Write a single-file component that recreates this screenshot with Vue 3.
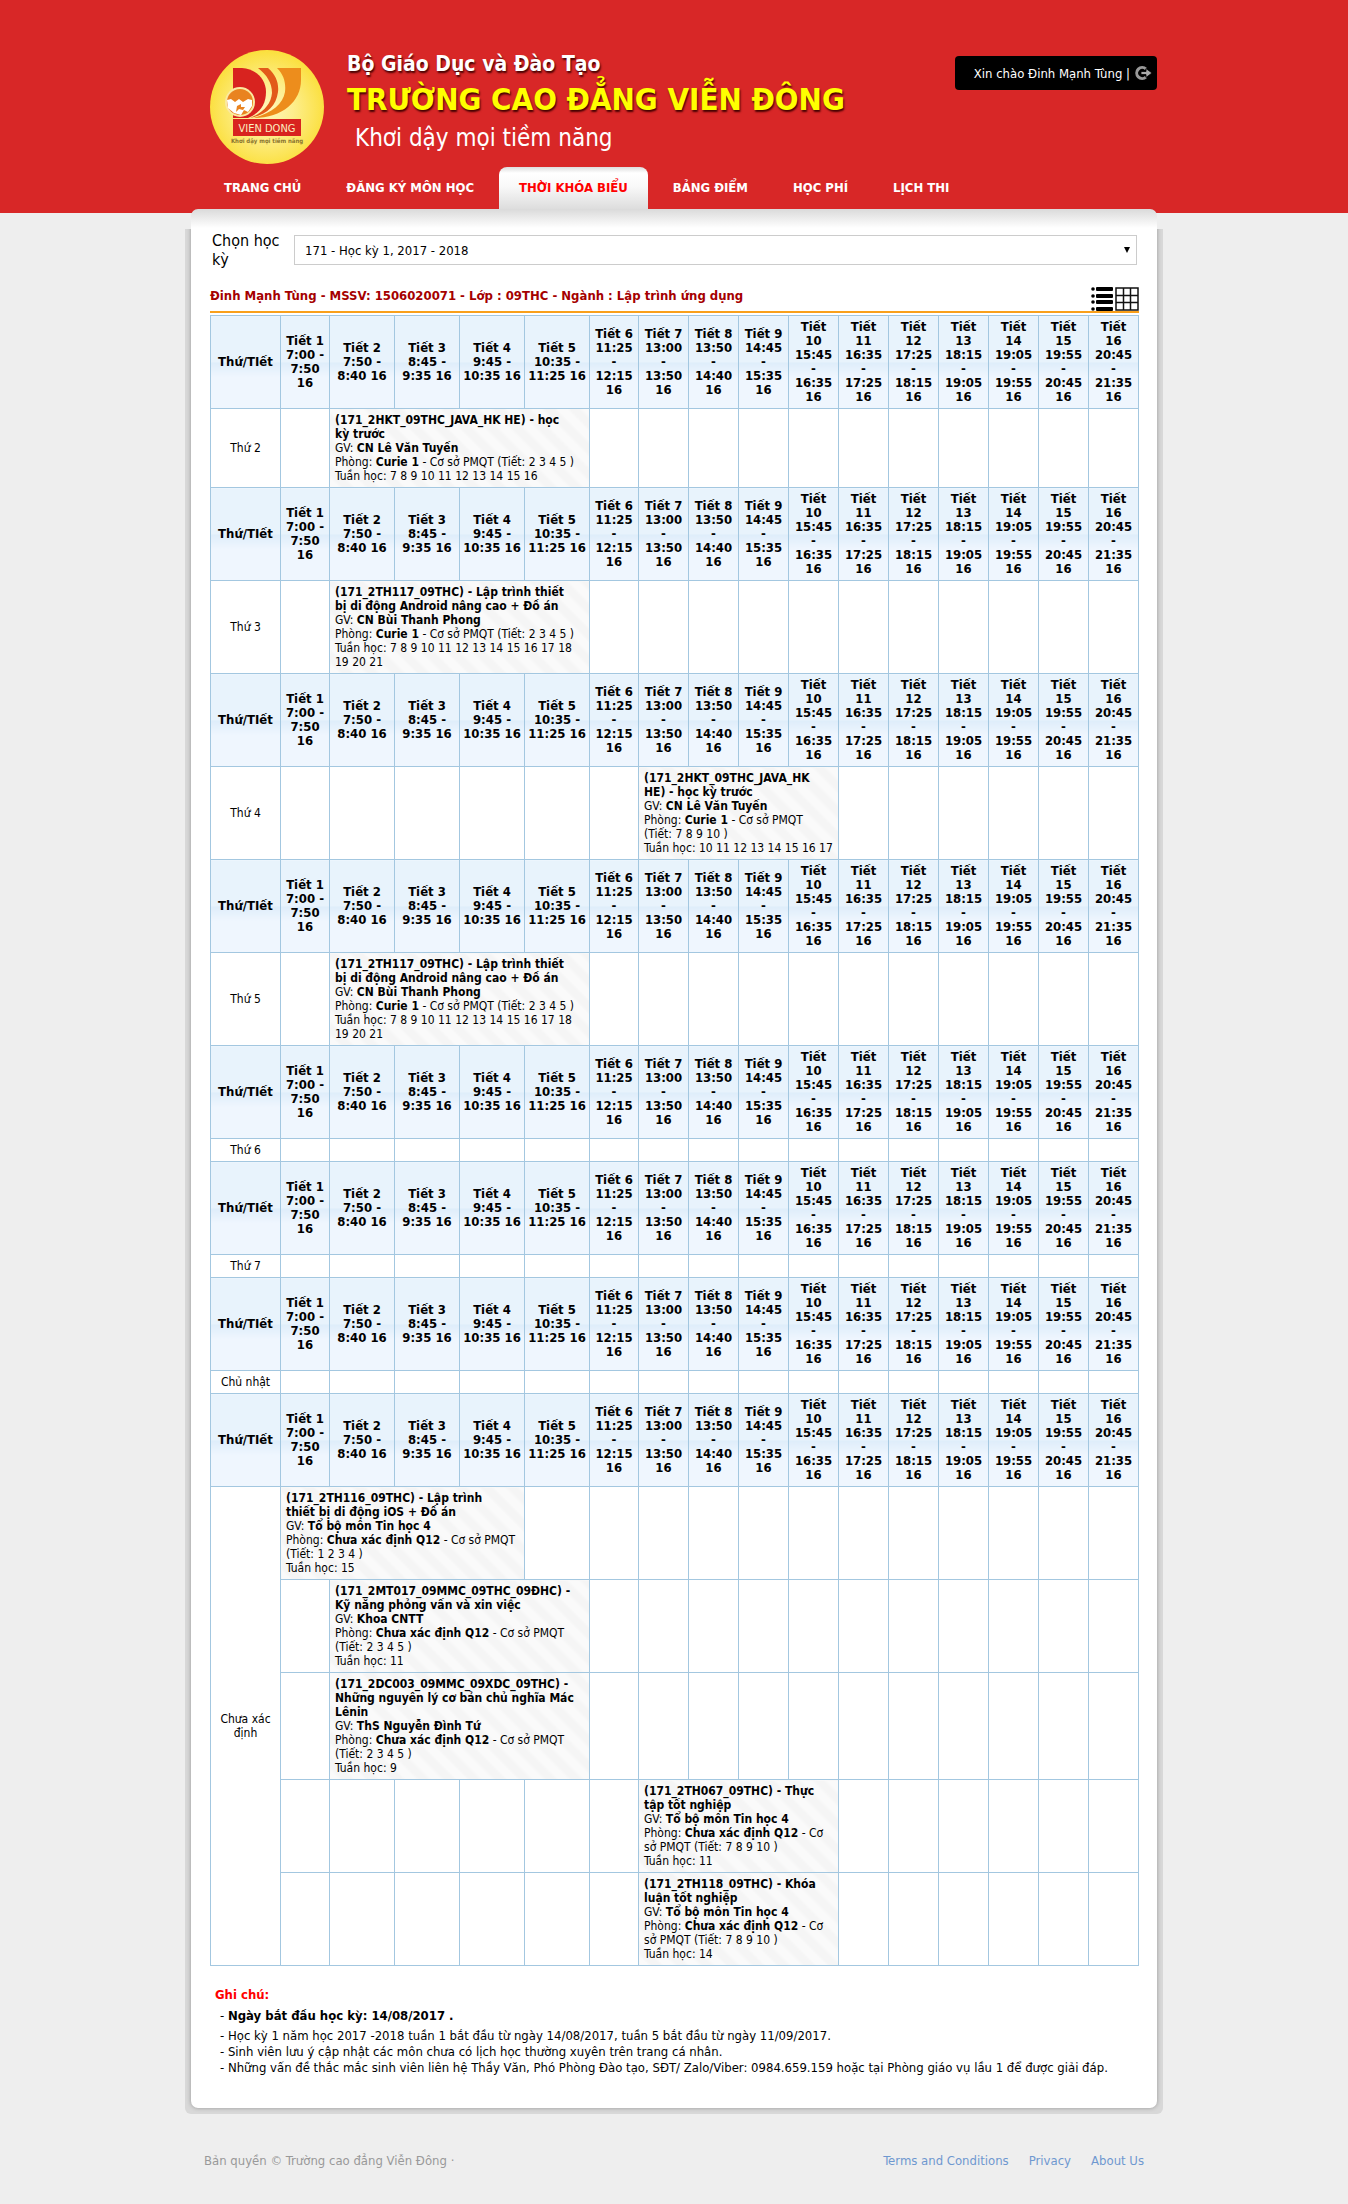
<script setup>
import { ref } from 'vue'

const nav = [
  { text: 'TRANG CHỦ' },
  { text: 'ĐĂNG KÝ MÔN HỌC' },
  { text: 'THỜI KHÓA BIỂU', active: true },
  { text: 'BẢNG ĐIỂM' },
  { text: 'HỌC PHÍ' },
  { text: 'LỊCH THI' },
]

const semester = ref('171')

const columnWidths = [70, 49, 65, 65, 65, 65, 49, 50, 50, 50, 50, 50, 50, 50, 50, 50, 50]

const periods = [
  ['Tiết 1', '7:00 -', '7:50', '16'],
  ['Tiết 2', '7:50 -', '8:40 16'],
  ['Tiết 3', '8:45 -', '9:35 16'],
  ['Tiết 4', '9:45 -', '10:35 16'],
  ['Tiết 5', '10:35 -', '11:25 16'],
  ['Tiết 6', '11:25', '-', '12:15', '16'],
  ['Tiết 7', '13:00', '-', '13:50', '16'],
  ['Tiết 8', '13:50', '-', '14:40', '16'],
  ['Tiết 9', '14:45', '-', '15:35', '16'],
  ['Tiết', '10', '15:45', '-', '16:35', '16'],
  ['Tiết', '11', '16:35', '-', '17:25', '16'],
  ['Tiết', '12', '17:25', '-', '18:15', '16'],
  ['Tiết', '13', '18:15', '-', '19:05', '16'],
  ['Tiết', '14', '19:05', '-', '19:55', '16'],
  ['Tiết', '15', '19:55', '-', '20:45', '16'],
  ['Tiết', '16', '20:45', '-', '21:35', '16'],
]

const android = {
  start: 2,
  title: ['(171_2TH117_09THC) - Lập trình thiết', 'bị di động Android nâng cao + Đồ án'],
  teacher: 'CN Bùi Thanh Phong',
  room: 'Curie 1',
  place: [' - Cơ sở PMQT (Tiết: 2 3 4 5 )'],
  weeks: ['7 8 9 10 11 12 13 14 15 16 17 18', '19 20 21'],
}

const days = [
  {
    name: ['Thứ 2'],
    rows: [{
      start: 2,
      title: ['(171_2HKT_09THC_JAVA_HK HE) - học', 'kỳ trước'],
      teacher: 'CN Lê Văn Tuyến',
      room: 'Curie 1',
      place: [' - Cơ sở PMQT (Tiết: 2 3 4 5 )'],
      weeks: ['7 8 9 10 11 12 13 14 15 16'],
    }],
  },
  { name: ['Thứ 3'], rows: [android] },
  {
    name: ['Thứ 4'],
    rows: [{
      start: 7,
      title: ['(171_2HKT_09THC_JAVA_HK', 'HE) - học kỳ trước'],
      teacher: 'CN Lê Văn Tuyến',
      room: 'Curie 1',
      place: [' - Cơ sở PMQT', '(Tiết: 7 8 9 10 )'],
      weeks: ['10 11 12 13 14 15 16 17'],
    }],
  },
  { name: ['Thứ 5'], rows: [android] },
  { name: ['Thứ 6'], rows: [null] },
  { name: ['Thứ 7'], rows: [null] },
  { name: ['Chủ nhật'], rows: [null] },
  {
    name: ['Chưa xác', 'định'],
    rows: [
      {
        start: 1,
        title: ['(171_2TH116_09THC) - Lập trình', 'thiết bị di động iOS + Đồ án'],
        teacher: 'Tổ bộ môn Tin học 4',
        room: 'Chưa xác định Q12',
        place: [' - Cơ sở PMQT', '(Tiết: 1 2 3 4 )'],
        weeks: ['15'],
      },
      {
        start: 2,
        title: ['(171_2MT017_09MMC_09THC_09ĐHC) -', 'Kỹ năng phỏng vấn và xin việc'],
        teacher: 'Khoa CNTT',
        room: 'Chưa xác định Q12',
        place: [' - Cơ sở PMQT', '(Tiết: 2 3 4 5 )'],
        weeks: ['11'],
      },
      {
        start: 2,
        title: ['(171_2DC003_09MMC_09XDC_09THC) -', 'Những nguyên lý cơ bản chủ nghĩa Mác', 'Lênin'],
        teacher: 'ThS Nguyễn Đình Tứ',
        room: 'Chưa xác định Q12',
        place: [' - Cơ sở PMQT', '(Tiết: 2 3 4 5 )'],
        weeks: ['9'],
      },
      {
        start: 7,
        title: ['(171_2TH067_09THC) - Thực', 'tập tốt nghiệp'],
        teacher: 'Tổ bộ môn Tin học 4',
        room: 'Chưa xác định Q12',
        place: [' - Cơ', 'sở PMQT (Tiết: 7 8 9 10 )'],
        weeks: ['11'],
      },
      {
        start: 7,
        title: ['(171_2TH118_09THC) - Khóa', 'luận tốt nghiệp'],
        teacher: 'Tổ bộ môn Tin học 4',
        room: 'Chưa xác định Q12',
        place: [' - Cơ', 'sở PMQT (Tiết: 7 8 9 10 )'],
        weeks: ['14'],
      },
    ],
  },
]

const SPAN = 4
const before = (c) => (c ? c.start - 1 : periods.length)
const after = (c) => (c ? periods.length - SPAN - c.start + 1 : 0)
</script>

<template>
  <div class="page">
    <header class="top">
      <div class="top-inner">
        <div class="brand">
          <svg class="logo" viewBox="0 0 114 114" role="img" aria-label="Vien Dong">
            <defs>
              <radialGradient id="sun" cx="50%" cy="52%" r="52%">
                <stop offset="0" stop-color="#fff6bd" />
                <stop offset="0.45" stop-color="#fdee8c" />
                <stop offset="1" stop-color="#fbdf3c" />
              </radialGradient>
            </defs>
            <circle cx="57" cy="57" r="57" fill="url(#sun)" />
            <path d="M23 18 H32 C46 19 56 29 56 42 C56 54 50 63 38 68 H23 Z" fill="#d8231f" />
            <path d="M48 18 H58 C66 25 69 33 68 42 C66 57 56 65 40 68 C54 62 61 54 62 43 C62 33 57 25 48 18 Z" fill="#e25a1a" />
            <path d="M67 18 H91 V30 C91 52 72 68 43 68 C62 63 73 54 75 42 C76 33 74 25 67 18 Z" fill="#ed8d1c" />
            <circle cx="30" cy="52" r="15" fill="#fbe9a0" />
            <circle cx="30" cy="52" r="13" fill="#e98320" />
            <path d="M17 50 L21 49 L25 52 L29 49 L33 52 L38 49 L42 50 L42 56 L38 62 L34 60 L31 65 L24 63 L18 58 Z" fill="#fff" />
            <path d="M27 56 L31 54 L31 57 L35 57 L33 60 L29 59 L26 62 Z" fill="#e98320" />
            <rect x="23" y="69" width="68" height="17" fill="#d8231f" />
            <text x="57" y="82" text-anchor="middle" font-size="11" fill="#fbeec0">VIEN DONG</text>
            <text x="57" y="93" text-anchor="middle" font-size="6" font-weight="bold" fill="#8a7430">Khơi dậy mọi tiềm năng</text>
          </svg>
          <div class="titles">
            <p class="ministry">Bộ Giáo Dục và Đào Tạo</p>
            <h1 class="school">TRƯỜNG CAO ĐẲNG VIỄN ĐÔNG</h1>
            <p class="slogan">Khơi dậy mọi tiềm năng</p>
          </div>
          <div class="user">
            <span>Xin chào Đinh Mạnh Tùng |</span>
            <button type="button" class="logout" aria-label="Đăng xuất">
              <svg viewBox="0 0 18 16" width="18" height="16">
                <path d="M12 4 A5.5 5.5 0 1 0 12 12" fill="none" stroke="#999" stroke-width="3" />
                <path d="M7 6.500 H12 V3.500 L18 8 L12 12.500 V9.500 H7 Z" fill="#aaa" stroke="#000" stroke-width="0.800" />
              </svg>
            </button>
          </div>
        </div>
        <nav class="nav">
          <a v-for="item in nav" :key="item.text" href="#" :class="{ active: item.active }">{{ item.text }}</a>
        </nav>
      </div>
    </header>

    <div class="frame">
      <main class="card">
        <div class="picker">
          <label for="semester">Chọn học kỳ</label>
          <div class="select-box">
            <select id="semester" v-model="semester">
              <option value="171">171 - Học kỳ 1, 2017 - 2018</option>
            </select>
          </div>
        </div>

        <div class="student">
          <h2>Đinh Mạnh Tùng - MSSV: 1506020071 - Lớp : 09THC - Ngành : Lập trình ứng dụng</h2>
          <div class="views">
            <button type="button" aria-label="Danh sách">
              <svg viewBox="0 0 22 24" width="22" height="24">
                <g v-for="y in [2, 9, 15, 22]" :key="y">
                  <circle cx="2" :cy="y" r="1.800" />
                  <rect x="5" :y="y - 2" width="17" height="4" rx="1" />
                </g>
              </svg>
            </button>
            <button type="button" aria-label="Lưới">
              <svg viewBox="0 0 24 24" width="24" height="24">
                <path d="M1 1 H23 V23 H1 Z M8.500 1 V23 M15.500 1 V23 M1 8.500 H23 M1 15.500 H23" fill="none" stroke="#111" stroke-width="1.500" />
              </svg>
            </button>
          </div>
        </div>

        <table class="timetable">
          <colgroup>
            <col v-for="(w, i) in columnWidths" :key="i" :style="{ width: w + 'px' }">
          </colgroup>
          <tbody v-for="day in days" :key="day.name[0]">
            <tr>
              <th scope="col">Thứ/TIết</th>
              <th v-for="(p, i) in periods" :key="i" scope="col">
                <template v-for="(line, j) in p" :key="j"><br v-if="j">{{ line }}</template>
              </th>
            </tr>
            <tr v-for="(course, r) in day.rows" :key="r">
              <td v-if="r === 0" class="day" :rowspan="day.rows.length">
                <template v-for="(line, j) in day.name" :key="j"><br v-if="j">{{ line }}</template>
              </td>
              <td v-for="n in before(course)" :key="'b' + n"></td>
              <td v-if="course" class="course" :colspan="SPAN">
                <b><template v-for="(line, j) in course.title" :key="j"><br v-if="j">{{ line }}</template></b><br>
                GV: <b>{{ course.teacher }}</b><br>
                Phòng: <b>{{ course.room }}</b><template v-for="(line, j) in course.place" :key="j"><br v-if="j">{{ line }}</template><br>
                Tuần học: <template v-for="(line, j) in course.weeks" :key="j"><br v-if="j">{{ line }}</template>
              </td>
              <td v-for="n in after(course)" :key="'a' + n"></td>
            </tr>
          </tbody>
        </table>

        <section class="notes">
          <h3>Ghi chú:</h3>
          <p class="start">- <b>Ngày bắt đầu học kỳ: 14/08/2017 .</b></p>
          <p>- Học kỳ 1 năm học 2017 -2018 tuần 1 bắt đầu từ ngày 14/08/2017, tuần 5 bắt đầu từ ngày 11/09/2017.</p>
          <p>- Sinh viên lưu ý cập nhật các môn chưa có lịch học thường xuyên trên trang cá nhân.</p>
          <p>- Những vấn đề thắc mắc sinh viên liên hệ Thầy Văn, Phó Phòng Đào tạo, SĐT/ Zalo/Viber: 0984.659.159 hoặc tại Phòng giáo vụ lầu 1 để được giải đáp.</p>
        </section>
      </main>
    </div>

    <footer class="foot">
      <span>Bản quyền © Trường cao đẳng Viễn Đông ·</span>
      <div class="links">
        <a href="#">Terms and Conditions</a>
        <a href="#">Privacy</a>
        <a href="#">About Us</a>
      </div>
    </footer>
  </div>
</template>

<style>
body {
  margin: 0;
  background: #eee;
}
</style>

<style scoped>
.page {
  font-family: Tahoma, "DejaVu Sans Condensed", "DejaVu Sans", sans-serif;
  font-size: 13px;
  color: #000;
}
.page * {
  box-sizing: border-box;
}
h1, h2, h3, p {
  margin: 0;
}
a {
  text-decoration: none;
}
button {
  padding: 0;
  border: 0;
  background: none;
  cursor: pointer;
}
button svg {
  display: block;
}

.top {
  background: #d82727;
  padding: 50px 0 4px;
}
.top-inner {
  max-width: 966px;
  margin: 0 auto;
}
.brand {
  display: flex;
  align-items: flex-start;
  height: 117px;
  padding-left: 19px;
}
.logo {
  width: 114px;
  height: 114px;
  flex: none;
}
.titles {
  flex: 1;
  padding-left: 23px;
  color: #fff;
  white-space: nowrap;
}
.ministry {
  font-size: 21px;
  line-height: 28px;
  font-weight: bold;
  text-shadow: 1px 2px 2px #400;
}
.school {
  font-size: 31px;
  line-height: 42px;
  color: #ff0;
  text-shadow: 1px 2px 2px #400;
}
.slogan {
  font-size: 24px;
  line-height: 36px;
  padding-left: 8px;
}
.user {
  display: flex;
  align-items: center;
  gap: 4px;
  height: 34px;
  margin-top: 6px;
  padding: 0 5px 0 19px;
  border-radius: 4px;
  background: #000;
  color: #fff;
  white-space: nowrap;
}

.nav {
  display: flex;
  gap: 5px;
  padding-left: 13px;
}
.nav a {
  height: 42px;
  padding: 0 20px;
  line-height: 41px;
  font-weight: bold;
  color: #fff;
  white-space: nowrap;
}
.nav a.active {
  color: #f00;
  border-radius: 8px 8px 0 0;
  background: linear-gradient(#ddd, #fff 6px, #f8f8f8 20px, #ddd);
}

.frame {
  max-width: 978px;
  margin: -4px auto 0;
  padding: 0 6px 6px;
  border-radius: 0 0 6px 6px;
  background: linear-gradient(transparent 20px, #d8d8d8 20px);
}
.card {
  position: relative;
  padding: 22px 18px 32px 19px;
  border-radius: 7px;
  background: linear-gradient(#dadada, #fff 19px);
}
.card::before {
  content: "";
  position: absolute;
  inset: 0;
  border-radius: 7px;
  box-shadow: 0 0 4px rgba(0, 0, 0, 0.3);
  clip-path: inset(20px -6px -6px -6px);
  pointer-events: none;
}

.picker {
  display: flex;
  align-items: flex-start;
  padding: 0 2px;
}
.picker label {
  width: 82px;
  padding-right: 12px;
  font-size: 16px;
  line-height: 19px;
}
.select-box {
  position: relative;
  flex: 1;
  margin-top: 4px;
}
.select-box::after {
  content: "";
  position: absolute;
  top: 12px;
  right: 7px;
  border: solid transparent;
  border-width: 6px 3px 0;
  border-top-color: #000;
  pointer-events: none;
}
select {
  display: block;
  width: 100%;
  height: 30px;
  padding: 0 10px;
  border: 1px solid #ccc;
  border-radius: 0;
  background: #fff;
  appearance: none;
  font: 13px Tahoma, "DejaVu Sans Condensed", "DejaVu Sans", sans-serif;
  color: #000;
}

.student {
  display: flex;
  align-items: flex-end;
  justify-content: space-between;
  height: 44px;
  border-bottom: 2px solid #f9a01b;
}
.student h2 {
  font-size: 13px;
  line-height: 31px;
  color: #a50000;
}
.views {
  display: flex;
  gap: 2px;
}

.timetable {
  width: 100%;
  margin-top: 2px;
  border-collapse: collapse;
  table-layout: fixed;
  font-size: 12px;
  line-height: 14px;
}
th, td {
  height: 23px;
  padding: 4px 0;
  border: 1px solid #a3c7e0;
  vertical-align: middle;
  text-align: center;
  white-space: nowrap;
}
th {
  font-size: 13px;
  background: linear-gradient(#e8f3fc 50%, #deedfa 50%, #eff6fe 66%);
}
td.course {
  padding: 4px 5px;
  text-align: left;
  background: repeating-linear-gradient(45deg, #fafafa 0 6px, #f5f5f5 9px 15px, #fafafa 18px);
}

.notes {
  padding: 18px 0 0 5px;
  line-height: 16px;
}
.notes h3 {
  font-size: 13px;
  line-height: 21px;
  color: #f00;
}
.notes p {
  padding-left: 5px;
}
.notes .start {
  line-height: 21px;
  padding-bottom: 2px;
}

.foot {
  display: flex;
  justify-content: space-between;
  max-width: 940px;
  margin: 0 auto;
  padding: 39px 0 28px;
  line-height: 16px;
  color: #999;
}
.links {
  display: flex;
  gap: 20px;
}
.links a {
  color: #6e98d0;
}
</style>
